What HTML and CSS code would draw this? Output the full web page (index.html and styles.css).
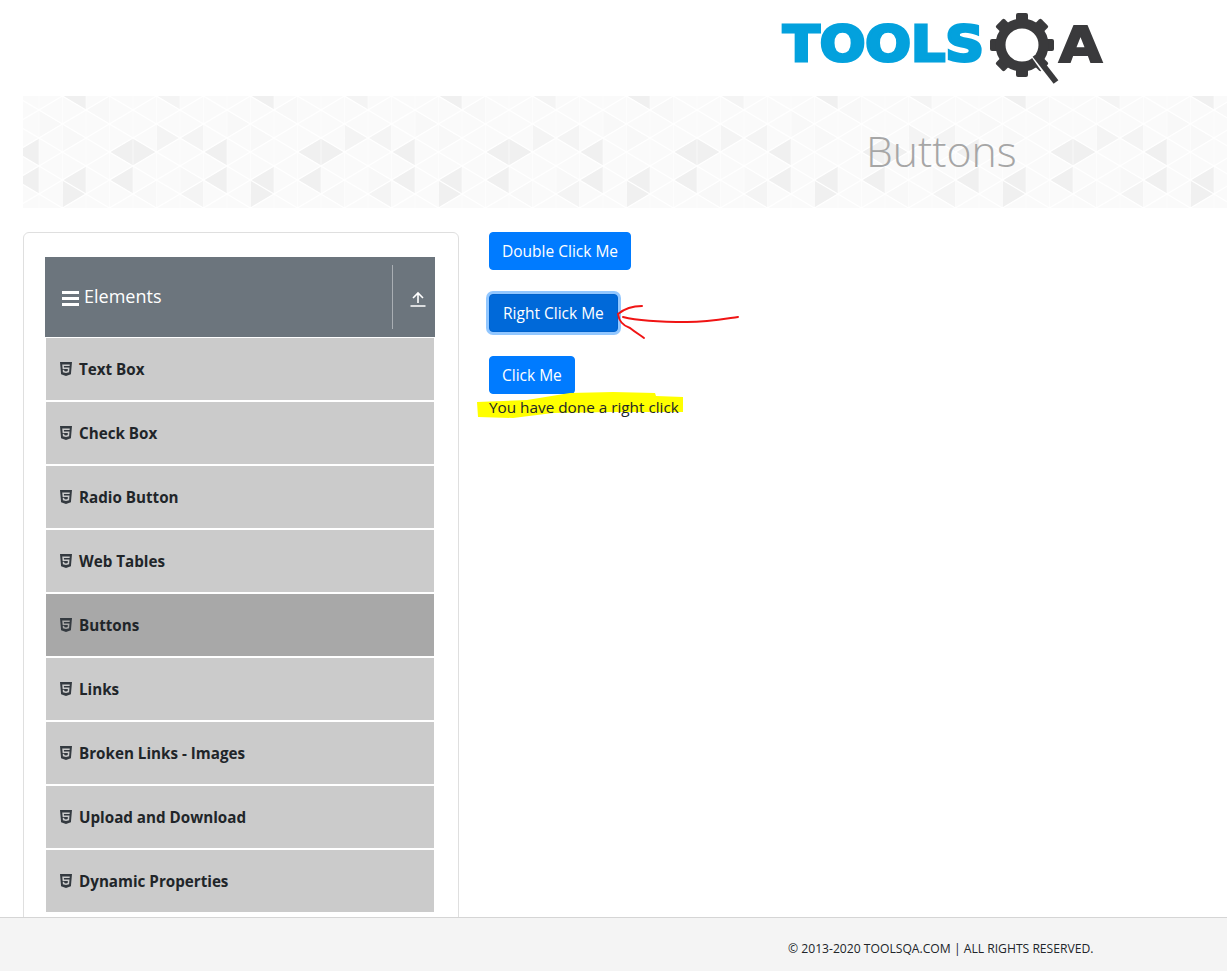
FILE: index.html
```html
<!DOCTYPE html>
<html lang="en">
<head>
    <meta charset="UTF-8">
    <title>ToolsQA - Buttons</title>
    <link rel="stylesheet" href="styles.css">
</head>
<body>

<svg width="0" height="0" class="defs">
    <symbol id="html5" viewBox="0 0 384 512">
        <path d="M0 32l34.9 395.8L191.5 480l157.6-52.2L384 32H0zm308.2 127.9H124.4l4.1 49.4h175.6l-13.6 148.4-97.9 27v.3h-1.1l-98.7-27.3-6-75.8h47.7L138 320l53.5 14.5 53.7-14.5 6-62.2H84.3L71.5 112.2h241.1l-4.4 47.7z"/>
    </symbol>
</svg>

<header class="top">
    <svg class="logo" width="321" height="73" viewBox="0 0 321 73">
        <text class="logo-tools" x="1" y="47.5" textLength="201" lengthAdjust="spacingAndGlyphs">TOOLS</text>
        <g class="gear">
            <rect x="234" y="0" width="12" height="64" rx="2"/>
            <rect x="234" y="0" width="12" height="64" rx="2" transform="rotate(45 240 32)"/>
            <rect x="234" y="0" width="12" height="64" rx="2" transform="rotate(90 240 32)"/>
            <rect x="234" y="0" width="12" height="64" rx="2" transform="rotate(135 240 32)"/>
        </g>
        <circle class="gear-ring" cx="240" cy="32" r="21.5"/>
        <line class="handle-gap" x1="249" y1="39" x2="268" y2="66"/>
        <line class="handle" x1="253" y1="42" x2="274" y2="69"/>
        <text class="logo-a" x="277" y="48.5" textLength="43" lengthAdjust="spacingAndGlyphs">A</text>
    </svg>
</header>

<div class="banner">
    <h1>Buttons</h1>
</div>

<main class="main">
    <aside class="card">
        <div class="group-head">
            <span class="group-title">
                <span class="bars"><i></i><i></i><i></i></span>
                Elements
            </span>
            <span class="collapse">
                <svg width="16" height="16" viewBox="0 0 16 16">
                    <path d="M8 12V2M3 7l5-5 5 5M0.5 15h15"/>
                </svg>
            </span>
        </div>
        <ul class="menu">
            <li class="menu-item"><svg class="icon"><use href="#html5"/></svg>Text Box</li>
            <li class="menu-item"><svg class="icon"><use href="#html5"/></svg>Check Box</li>
            <li class="menu-item"><svg class="icon"><use href="#html5"/></svg>Radio Button</li>
            <li class="menu-item"><svg class="icon"><use href="#html5"/></svg>Web Tables</li>
            <li class="menu-item active"><svg class="icon"><use href="#html5"/></svg>Buttons</li>
            <li class="menu-item"><svg class="icon"><use href="#html5"/></svg>Links</li>
            <li class="menu-item"><svg class="icon"><use href="#html5"/></svg>Broken Links - Images</li>
            <li class="menu-item"><svg class="icon"><use href="#html5"/></svg>Upload and Download</li>
            <li class="menu-item"><svg class="icon"><use href="#html5"/></svg>Dynamic Properties</li>
        </ul>
    </aside>

    <section class="content">
        <!-- hand drawn marks on the screenshot -->
        <svg class="marks" width="300" height="200" viewBox="0 0 300 200">
            <path class="mark-yellow" d="M8 170 58 168 101 161 144 160 186 161 187 164 214 165 214 180 141 180 84 181 44 186 9 185z"/>
            <path class="mark-red" d="M269 85C255 87 240 90 218 90C195 90 170 89 154 85M173 74C162 74 155 77 149 82C150 90 155 94 161 96C166 100 171 103 175 106"/>
        </svg>
        <div class="btn-row"><button class="btn">Double Click Me</button></div>
        <div class="btn-row"><button class="btn focused">Right Click Me</button></div>
        <div><button class="btn">Click Me</button></div>
        <p class="message">You have done a right click</p>
    </section>
</main>

<footer class="footer">
    <span>© 2013-2020 TOOLSQA.COM | ALL RIGHTS RESERVED.</span>
</footer>

</body>
</html>
```

FILE: styles.css
```css
* {
    box-sizing: border-box;
}
html, body {
    height: 100%;
}
body {
    margin: 0;
    height: 100vh;
    overflow: hidden;
    display: flex;
    flex-direction: column;
    font-family: "Open Sans", "Noto Sans", sans-serif;
    font-size: 15px;
    color: #212529;
    background: #fff;
}
.defs {
    display: block;
    height: 0;
}

/* top */
.top {
    flex: none;
    height: 96px;
    padding: 13px 0 0 782px;
}
.logo {
    display: block;
    overflow: visible;
}
.logo-tools {
    font-family: "DejaVu Sans", sans-serif;
    font-weight: 700;
    font-size: 50px;
    fill: #03a1dd;
    stroke: #03a1dd;
    stroke-width: 3;
}
.logo-a {
    font-family: "DejaVu Sans", sans-serif;
    font-weight: 700;
    font-size: 50px;
    fill: #3a3a3c;
    stroke: #3a3a3c;
    stroke-width: 2;
}
.gear {
    fill: #3a3a3c;
}
.gear-ring {
    fill: #fff;
    stroke: #3a3a3c;
    stroke-width: 10;
}
.handle-gap {
    stroke: #fff;
    stroke-width: 5;
}
.handle {
    stroke: #3a3a3c;
    stroke-width: 6;
}

.banner {
    flex: none;
    height: 112px;
    margin-left: 23px;
    padding: 0 0 4px 843px;
    display: flex;
    align-items: center;
    background-color: #fafafa;
    background-image: url("data:image/svg+xml,%3Csvg xmlns='http://www.w3.org/2000/svg' width='188' height='112'%3E%3Cg fill='%23f0f0f0'%3E%3Cpath d='M16 42v28l-23.5-14zM204 42v28l-23.5-14zM110 42v28l-23.5-14zM110 42v28l23.5-14zM16 70v28l-23.5-14zM204 70v28l-23.5-14zM63 70v28l-23.5-14zM110 70v28l-23.5-14zM39.5 84v28l23.5-14zM63 -14v28l-23.5-14z'/%3E%3C/g%3E%3Cg fill='%23f4f4f4'%3E%3Cpath d='M133.5 28v28l23.5-14zM180.5 28v28l-23.5-14zM180.5 84v28l-23.5-14zM157 -14v28l-23.5-14z'/%3E%3C/g%3E%3Cg fill='%23f8f8f8'%3E%3Cpath d='M39.5 28v28l23.5-14zM86.5 0v28l-23.5-14zM157 70v28l23.5-14zM16 14v28l23.5-14zM133.5 84v28l-23.5-14z'/%3E%3C/g%3E%3Cg stroke='%23fff' stroke-width='1.2' fill='none'%3E%3Cpath d='M0 -107.5l188 112M0 -79.5l188 112M0 -51.5l188 112M0 -23.5l188 112M0 4.5l188 112M0 32.5l188 112M0 60.5l188 112M0 88.5l188 112M0 23.5l188 -112M0 51.5l188 -112M0 79.5l188 -112M0 107.5l188 -112M0 135.5l188 -112M0 163.5l188 -112M0 191.5l188 -112M0 219.5l188 -112'/%3E%3C/g%3E%3Cg stroke='%23fff' stroke-opacity='.5' fill='none'%3E%3Cpath d='M16 0v112M39.5 0v112M63 0v112M86.5 0v112M110 0v112M133.5 0v112M157 0v112M180.5 0v112'/%3E%3C/g%3E%3C/svg%3E");
}
.banner h1 {
    margin: 0;
    font-size: 42.7px;
    font-weight: 300;
    color: #a6a6a6;
}

/* main area, the card runs on under the footer */
.main {
    flex: 1;
    min-height: 0;
    overflow: hidden;
    display: grid;
    grid-template-columns: 436px 1fr;
    column-gap: 30px;
    align-items: start;
    padding: 24px 0 0 23px;
}
.card {
    border: 1px solid #dfdfdf;
    border-radius: 6px;
    padding: 24px 23px 24px 21px;
}
.group-head {
    height: 80px;
    margin-bottom: 1px;
    display: flex;
    align-items: center;
    background: #6c757d;
    color: #fff;
}
.group-title {
    flex: 1;
    display: flex;
    align-items: center;
    gap: 5px;
    padding: 0 0 2px 17px;
    font-size: 18px;
}
.bars {
    display: flex;
    flex-direction: column;
    gap: 3px;
    width: 17px;
    margin-top: 4px;
}
.bars i {
    display: block;
    height: 3px;
    background: #fff;
}
.collapse {
    width: 43px;
    height: 64px;
    padding-left: 17px;
    display: flex;
    align-items: center;
    border-left: 1px solid #a9aeb3;
}
.collapse svg {
    margin-top: 4px;
}
.collapse path {
    fill: none;
    stroke: #fff;
    stroke-width: 1.6;
}
.menu {
    list-style: none;
    margin: 0;
    padding: 0 1px;
    display: flex;
    flex-direction: column;
    gap: 2px;
}
.menu-item {
    height: 62px;
    padding-left: 14px;
    display: flex;
    align-items: center;
    background: #cbcbcb;
    font-size: 15.2px;
    font-weight: 700;
    color: #212529;
}
.menu-item.active {
    background: #a8a8a8;
}
.icon {
    width: 12px;
    height: 16px;
    margin-right: 7px;
    fill: #343a40;
}

/* buttons */
.content {
    position: relative;
}
.btn-row {
    margin-bottom: 24px;
}
.btn {
    display: block;
    height: 38px;
    padding: 0 12px;
    border: 1px solid #007bff;
    border-radius: 4px;
    background: #007bff;
    color: #fff;
    font-family: inherit;
    font-size: 15.5px;
}
.btn.focused {
    padding: 0 13px;
    background: #0069d9;
    border-color: #0062cc;
    box-shadow: 0 0 0 3px rgba(38, 143, 255, .5);
}
.message {
    position: relative;
    margin: 2px 0 0;
    font-size: 15.3px;
    line-height: 22px;
}
.marks {
    position: absolute;
    left: -20px;
    top: 0;
}
.mark-yellow {
    fill: #ffff00;
}
.mark-red {
    fill: none;
    stroke: #f01414;
    stroke-width: 2;
    stroke-linecap: round;
}

.footer {
    flex: none;
    height: 54px;
    padding: 22px 0 0 788px;
    border-top: 1px solid #d5d5d5;
    background: #f4f4f4;
    font-size: 12.15px;
    color: #212529;
}
```
